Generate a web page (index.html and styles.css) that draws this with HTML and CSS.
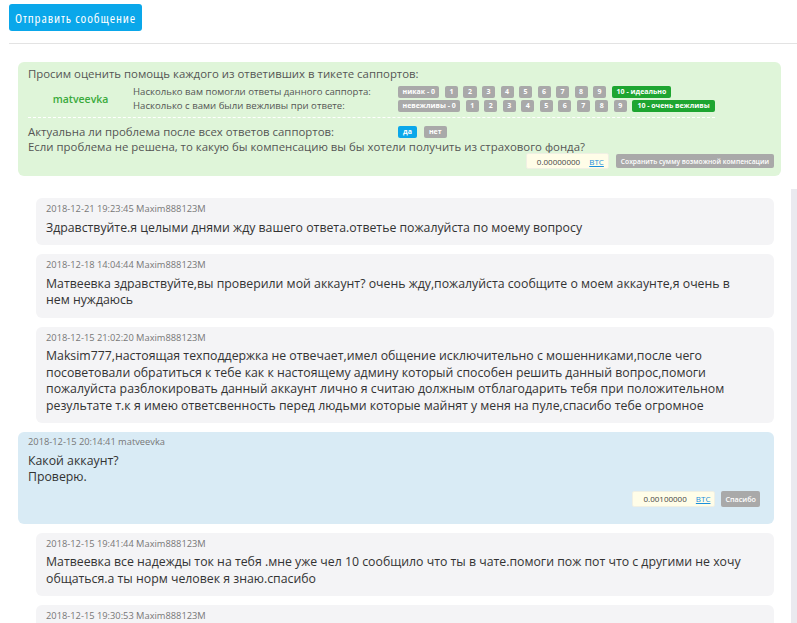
FILE: index.html
```html
<!DOCTYPE html>
<html lang="ru">
<head>
<meta charset="utf-8">
<title>Тикет</title>
<link rel="stylesheet" href="styles.css">
</head>
<body>
<div class="page">
  <div class="toolbar">
    <button class="send">Отправить сообщение</button>
  </div>
  <hr class="sep">

  <div class="rating">
    <div class="rating-title">Просим оценить помощь каждого из ответивших в тикете саппортов:</div>
    <div class="rating-grid">
      <div class="agent-name">matveevka</div>
      <div class="q-label">Насколько вам помогли ответы данного саппорта:</div>
      <div class="scale">
        <span class="chip">никак - 0</span>
        <span class="chip">1</span><span class="chip">2</span><span class="chip">3</span>
        <span class="chip">4</span><span class="chip">5</span><span class="chip">6</span>
        <span class="chip">7</span><span class="chip">8</span><span class="chip">9</span>
        <span class="chip chip-on">10 - идеально</span>
      </div>
      <div class="q-label">Насколько с вами были вежливы при ответе:</div>
      <div class="scale">
        <span class="chip">невежливы - 0</span>
        <span class="chip">1</span><span class="chip">2</span><span class="chip">3</span>
        <span class="chip">4</span><span class="chip">5</span><span class="chip">6</span>
        <span class="chip">7</span><span class="chip">8</span><span class="chip">9</span>
        <span class="chip chip-on">10 - очень вежливы</span>
      </div>
    </div>
    <div class="actual-row">
      <span>Актуальна ли проблема после всех ответов саппортов:</span>
      <div class="yesno">
        <span class="chip chip-yes">да</span>
        <span class="chip chip-no">нет</span>
      </div>
    </div>
    <div class="comp-q">Если проблема не решена, то какую бы компенсацию вы бы хотели получить из страхового фонда?</div>
    <div class="amount-row">
      <div class="amount"><span class="amount-val">0.00000000</span><a class="btc" href="#">BTC</a></div>
      <button class="grey-btn">Сохранить сумму возможной компенсации</button>
    </div>
  </div>

  <div class="thread">
    <div class="messages">
      <div class="msg user">
        <div class="meta">2018-12-21 19:23:45 Maxim888123M</div>
        <div class="text">Здравствуйте.я целыми днями жду вашего ответа.ответье пожалуйста по моему вопросу</div>
      </div>
      <div class="msg user">
        <div class="meta">2018-12-18 14:04:44 Maxim888123M</div>
        <div class="text">Матвеевка здравствуйте,вы проверили мой аккаунт? очень жду,пожалуйста сообщите о моем аккаунте,я очень в нем нуждаюсь</div>
      </div>
      <div class="msg user">
        <div class="meta">2018-12-15 21:02:20 Maxim888123M</div>
        <div class="text">Maksim777,настоящая техподдержка не отвечает,имел общение исключительно с мошенниками,после чего посоветовали обратиться к тебе как к настоящему админу который способен решить данный вопрос,помоги пожалуйста разблокировать данный аккаунт лично я считаю должным отблагодарить тебя при положительном результате т.к я имею ответсвенность перед людьми которые майнят у меня на пуле,спасибо тебе огромное</div>
      </div>
      <div class="msg agent">
        <div class="meta">2018-12-15 20:14:41 matveevka</div>
        <div class="text">Какой аккаунт?<br>Проверю.</div>
        <div class="tip-row">
          <div class="amount"><span class="amount-val">0.00100000</span><a class="btc" href="#">BTC</a></div>
          <button class="grey-btn thanks">Спасибо</button>
        </div>
      </div>
      <div class="msg user">
        <div class="meta">2018-12-15 19:41:44 Maxim888123M</div>
        <div class="text">Матвеевка все надежды ток на тебя .мне уже чел 10 сообщило что ты в чате.помоги пож пот что с другими не хочу общаться.а ты норм человек я знаю.спасибо</div>
      </div>
      <div class="msg user">
        <div class="meta">2018-12-15 19:30:53 Maxim888123M</div>
        <div class="text">Матвеевка здравствуйте</div>
      </div>
    </div>
    <div class="track"></div>
  </div>
</div>
</body>
</html>
```

FILE: styles.css
```css
html, body {
  margin: 0;
  background: #fff;
  overflow: hidden;
  height: 623px;
}

body {
  font-family: "Open Sans", "Liberation Sans", sans-serif;
  color: #333;
}

.page {
  padding: 4px 0 0 9px;
}

/* top toolbar */
.toolbar {
  display: flex;
}

.send {
  height: 27px;
  padding: 0 6px;
  border: 0;
  border-radius: 3px;
  background: #0aa7ea;
  color: #fff;
  font-family: "Open Sans", sans-serif;
  font-size: 13px;
  font-weight: 500;
  font-stretch: 75%;
  letter-spacing: 0.9px;
}

.sep {
  margin: 12px 0 0;
  border: 0;
  border-top: 1px solid #e3e3e3;
}

/* rating panel */
.rating {
  margin: 18px 16px 0 9px;
  padding: 3px 7px 7px 10px;
  background: #dff5d9;
  border-radius: 6px;
  color: #555;
  font-size: 11.4px;
}

.rating-title {
  line-height: 17px;
  margin-bottom: 3px;
}

.rating-grid {
  display: inline-grid;
  grid-template-columns: 105px 265px auto;
  grid-auto-rows: 14px;
  padding-bottom: 4px;
  border-bottom: 1px dashed #fff;
}

.agent-name {
  grid-row: span 2;
  align-self: center;
  text-align: center;
  color: #3aaa3c;
  font-weight: 600;
  font-size: 10.5px;
}

.q-label {
  font-size: 9.6px;
  line-height: 14px;
}

.scale {
  display: flex;
  align-items: center;
  gap: 5.5px;
}

.chip {
  display: inline-block;
  height: 12px;
  line-height: 12px;
  padding: 0 4.5px;
  border-radius: 2px;
  background: #a9a9a9;
  color: #fff;
  font-size: 7px;
  font-weight: 700;
  white-space: nowrap;
}

.chip-on {
  background: #1ea531;
  padding: 0 5px;
}

.chip-yes {
  background: #0aa7ea;
}

.actual-row {
  display: grid;
  grid-template-columns: 370px auto;
  align-items: center;
  margin-top: 6px;
  line-height: 15px;
}

.yesno {
  display: flex;
  gap: 7px;
}

.yesno .chip {
  padding: 0 5px;
}

.comp-q {
  line-height: 15px;
}

.amount-row {
  display: flex;
  justify-content: flex-end;
  align-items: center;
  gap: 7px;
  margin-top: -1px;
}

.amount {
  display: flex;
  align-items: center;
  justify-content: space-between;
  box-sizing: border-box;
  width: 83px;
  height: 16px;
  padding: 0 4px 0 10px;
  background: #fffde8;
  border: 1px solid #f0f0e4;
  border-radius: 2px;
  font-size: 8px;
  color: #444;
}

.btc {
  color: #1a8fdc;
  text-decoration: underline;
}

.grey-btn {
  height: 14px;
  padding: 0 5px;
  border: 0;
  border-radius: 2px;
  background: #a9a9a9;
  color: #fff;
  font-family: "Open Sans", sans-serif;
  font-size: 6.7px;
  font-weight: 600;
}

/* message thread */
.thread {
  display: flex;
  margin-top: 13px;
}

.messages {
  flex: 1;
  padding: 9px 17px 0 9px;
}

.track {
  width: 6px;
  background: #eaeaef;
  height: 450px;
}

.msg {
  margin-bottom: 9px;
  padding: 4px 24px 9px 10px;
  border-radius: 6px;
  background: #f4f4f6;
}

.msg.user {
  margin-left: 18px;
}

.msg.agent {
  background: #d9ebf5;
  padding: 3px 14px 17px 10px;
}

.meta {
  font-size: 9.3px;
  line-height: 14px;
  color: #777;
}

.text {
  margin-top: 3.5px;
  font-size: 12.3px;
  line-height: 16.5px;
  color: #333;
}

.tip-row {
  display: flex;
  justify-content: flex-end;
  align-items: center;
  gap: 6px;
  margin-top: 5px;
}

.thanks {
  height: 16px;
  padding: 0 4px;
  font-size: 7.2px;
}
```
